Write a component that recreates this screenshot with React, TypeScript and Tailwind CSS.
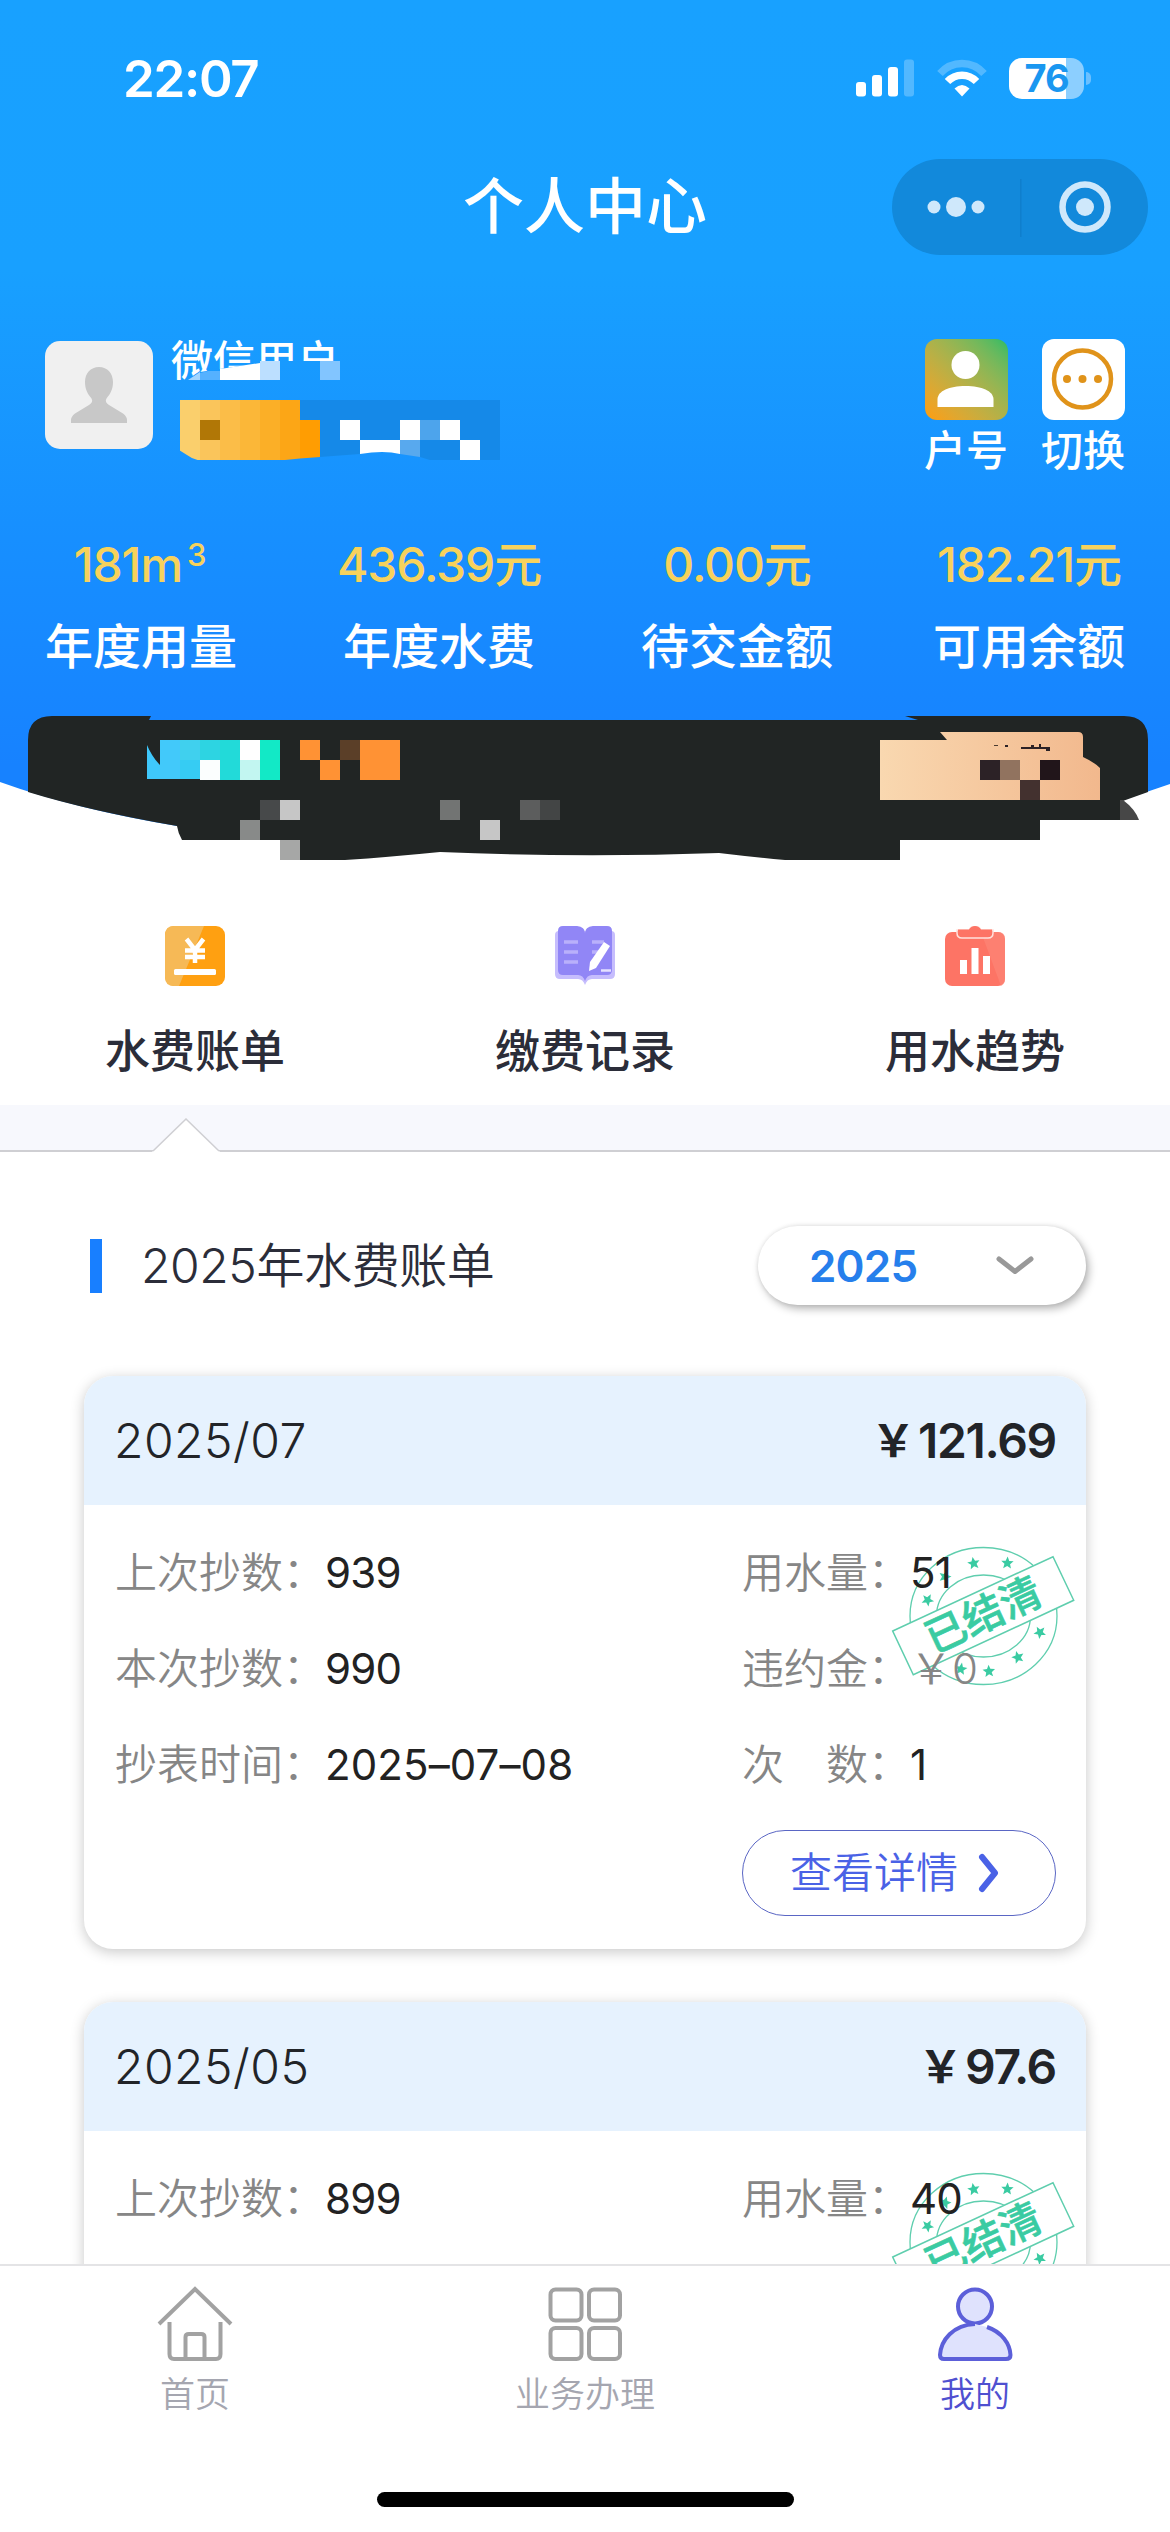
import { useState } from "react";

type Bill = {
  month: string;
  amount: string;
  last: string;
  current: string;
  date: string;
  usage: string;
  penalty: string;
  times: string;
}

const bills: Bill[] = [
  { month: "2025/07", amount: "121.69", last: "939", current: "990", date: "2025–07–08", usage: "51", penalty: "0", times: "1" },
  { month: "2025/05", amount: "97.6", last: "899", current: "939", date: "2025–05–08", usage: "40", penalty: "0", times: "1" },
];

const stats = [
  { value: "181m", sup: "3", label: "年度用量" },
  { value: "436.39元", label: "年度水费" },
  { value: "0.00元", label: "待交金额" },
  { value: "182.21元", label: "可用余额" },
];

// [x, y, width, height, color]
const nameCells: [number, number, number, number, string][] = [
  [180, 400, 20, 60, "#facf6c"],
  [200, 400, 20, 60, "#fac55b"],
  [220, 400, 20, 60, "#fbbd48"],
  [240, 400, 20, 60, "#fbb738"],
  [260, 400, 20, 60, "#fbaf27"],
  [280, 400, 20, 60, "#fca616"],
  [300, 400, 200, 60, "#1589e8"],
  [300, 420, 20, 40, "#ff9d02"],
  [200, 420, 20, 20, "#b17706"],
  [340, 420, 20, 20, "#ffffff"],
  [400, 420, 20, 20, "#ffffff"],
  [420, 420, 20, 20, "#4da4ec"],
  [440, 420, 20, 20, "#ffffff"],
  [360, 440, 40, 20, "#ffffff"],
  [400, 440, 20, 20, "#58a9ee"],
  [460, 440, 20, 20, "#ffffff"],
];

const bannerCells: [number, number, number, number, string][] = [
  [160, 740, 20, 39, "#42c9fa"],
  [180, 740, 20, 20, "#40d0ee"],
  [180, 760, 20, 19, "#36ccf3"],
  [200, 740, 20, 20, "#2dd4e2"],
  [200, 760, 20, 20, "#fbfefe"],
  [220, 740, 20, 40, "#22dad9"],
  [240, 740, 20, 20, "#ffffff"],
  [240, 760, 20, 20, "#c2f6f1"],
  [260, 740, 20, 40, "#12e9c6"],
  [300, 740, 20, 20, "#ff9234"],
  [320, 760, 20, 20, "#ff9234"],
  [340, 740, 20, 20, "#5b3f28"],
  [360, 740, 40, 40, "#ff9234"],
  [260, 800, 20, 20, "#47494a"],
  [280, 800, 20, 20, "#c6c6c6"],
  [240, 820, 20, 20, "#888a89"],
  [280, 840, 20, 20, "#a6a7a6"],
  [440, 800, 20, 20, "#727473"],
  [480, 820, 20, 20, "#c6c6c6"],
  [520, 800, 20, 20, "#5c5d5d"],
  [540, 800, 20, 20, "#434545"],
];

const faceCells: [number, number, number, number, string][] = [
  [980, 760, 20, 20, "#2c2226"],
  [1000, 760, 20, 20, "#91735f"],
  [1040, 760, 20, 20, "#21151a"],
  [1020, 780, 20, 20, "#43312f"],
  [994, 745, 4, 1, "#4a3a30"],
  [1005, 745, 3, 2, "#2c2226"],
  [1021, 747, 29, 2, "#2c2226"],
  [1031, 745, 3, 4, "#2c2226"],
  [1039, 744, 2, 5, "#2c2226"],
  [1046, 747, 4, 4, "#2c2226"],
];

const Cells = ({ cells }: { cells: [number, number, number, number, string][] }) => (
  <g shapeRendering="crispEdges">
    {cells.map(([x, y, w, h, color], i) => (
      <rect key={i} x={x} y={y} width={w} height={h} fill={color} />
    ))}
  </g>
);

// pixel blocks that hide the private parts of the header, plus the curved bottom edge
const HeaderMask = () => (
  <svg className="absolute left-0 top-0 pointer-events-none" width="1170" height="870" viewBox="0 0 1170 870">
    <defs>
      <linearGradient id="headerBlue" gradientUnits="userSpaceOnUse" x1="0" y1="0" x2="0" y2="870">
        <stop offset="0" stopColor="#18a1ff" />
        <stop offset="0.31" stopColor="#18a0ff" />
        <stop offset="0.62" stopColor="#178fff" />
        <stop offset="0.88" stopColor="#1782ff" />
      </linearGradient>
      <linearGradient id="peach" x1="0" y1="0" x2="1" y2="0">
        <stop offset="0" stopColor="#f9d8b0" />
        <stop offset="1" stopColor="#f2b88d" />
      </linearGradient>
    </defs>

    <path d="M186 380L200 372L240 366L260 361H345V384H186Z" fill="url(#headerBlue)" />
    <path d="M188 380L200 372V380Z" fill="#a3d5ff" />
    <path d="M200 373L208 371L220 371V380H200Z" fill="#55b1ff" />
    <path d="M220 369L260 363V380H220Z" fill="#ffffff" />
    <rect x="260" y="361" width="20" height="19" fill="#bcdfff" />
    <rect x="320" y="361" width="20" height="19" fill="#82c5ff" />

    <Cells cells={nameCells} />
    <path d="M179 450L187 455Q192 459 199 460.500L280 460.500Q300 458 320 457L360 454Q384 450 400 454L420 457L433 461H179Z" fill="url(#headerBlue)" />

    <path d="M0 782Q75 809 177 826Q300 846 440 850H720Q930 840 1123 800L1170 784V870H0Z" fill="#ffffff" />
    <path
      d="M28 740Q28 716 52 716H151L149 720H918L905 716H1124Q1148 716 1148 740V792L1120 802V820H1040V840H900V860H785Q752 857 719 853Q580 858 440 852Q390 857 345 860H300V840H182Q178 833 177 826Q90 811 28 792Z"
      fill="#212524"
    />
    <path d="M1120 800H1123Q1135 809 1139 820H1120Z" fill="#474747" />
    <path d="M147 745Q152 757 160 765V779H147Z" fill="#3fc8fb" />
    <Cells cells={bannerCells} />
    <path d="M880 740H947L940 732H1078Q1083 732 1083 737V757Q1094 762 1100 768V800H880Z" fill="url(#peach)" />
    <Cells cells={faceCells} />
  </svg>
);

const StatusBar = () => (
  <div className="flex h-[156px] items-center justify-between pl-[123px] pr-[79px]">
    <span className="text-[51px] font-semibold leading-none tracking-[-1.3px]">22:07</span>
    <div className="flex items-center">
      <svg width="58" height="38" viewBox="0 0 58 38" fill="#fff">
        <rect x="0" y="23" width="10" height="14.500" rx="3" />
        <rect x="16" y="16" width="10" height="21.500" rx="3" />
        <rect x="32" y="8" width="10" height="29.500" rx="3" />
        <rect x="48" y="0.500" width="10" height="37" rx="3" opacity="0.25" />
      </svg>
      <svg className="ml-[23px]" width="50" height="38" viewBox="0 0 50 38" fill="none">
        <path d="M3 14.500C15 1.200 35 1.200 47 14.500" stroke="#fff" strokeOpacity="0.25" strokeWidth="7.500" />
        <path d="M10.500 22.500C18.500 14 31.500 14 39.500 22.500" stroke="#fff" strokeWidth="7.500" />
        <path d="M25 37.500L17.500 29.500Q25 22.500 32.500 29.500Z" fill="#fff" />
      </svg>
      <div className="relative ml-[22px] flex h-[41px] w-[75px] items-center justify-center rounded-[13px] bg-[linear-gradient(90deg,#fff_57px,#8ccfff_57px)]">
        <span className="text-[38px] font-bold leading-[41px] tracking-[-1px] text-[#1a97f0]">76</span>
      </div>
      <div className="ml-[2px] h-[13px] w-[5px] rounded-r-full bg-[#6cc0ff]"></div>
    </div>
  </div>
);

const NavBar = () => (
  <div className="grid h-[102px] grid-cols-3 items-center">
    <div></div>
    <h1 className="text-center text-[61px] font-medium leading-none">个人中心</h1>
    <div className="mr-[22px] flex h-[96px] w-[256px] items-center justify-self-end rounded-full bg-[#1289db]">
      <svg width="256" height="96" viewBox="0 0 256 96" fill="#cfe8fb">
        <circle cx="42" cy="48" r="6.500" />
        <circle cx="64" cy="48" r="10" />
        <circle cx="86" cy="48" r="6.500" />
        <rect x="128" y="20" width="1.500" height="58" fill="#0f7fcd" />
        <circle cx="193" cy="48" r="22.500" fill="none" stroke="#cfe8fb" strokeWidth="6.500" />
        <circle cx="193" cy="48" r="9" />
      </svg>
    </div>
  </div>
);

const Profile = () => (
  <div className="flex h-[215px] items-start px-[45px] pt-[81px]">
    <div className="mt-[2px] h-[108px] w-[108px] rounded-[15px] bg-[#f0f0f0]">
      <svg width="108" height="108" viewBox="0 0 108 108" fill="#c8c8c8">
        <path d="M54 26C45.500 26 40 32.500 40 41C40 49 43 53 46.500 57.500C48 60 47 62 44 64L30 72.500Q26 75.500 26 79V82H82V79Q82 75.500 78 72.500L64 64C61 62 60 60 61.500 57.500C65 53 68 49 68 41C68 32.500 62.500 26 54 26Z" />
      </svg>
    </div>
    <p className="ml-[18px] text-[42px] font-medium leading-[44px]">微信用户</p>
    <div className="ml-auto flex gap-[33px]">
      <div className="flex w-[84px] flex-col items-center">
        <div className="h-[81px] w-[83px] rounded-[12px] bg-linear-to-tr from-[#ff9d05] to-[#1fbc66]">
          <svg width="83" height="81" viewBox="0 0 83 81" fill="#fff">
            <circle cx="40.500" cy="26" r="14" />
            <path d="M12.500 68V60C13 52 24 47 40.500 47S68 52 68.500 60V68Z" />
          </svg>
        </div>
        <span className="mt-[10px] text-[42px] font-medium leading-[42px]">户号</span>
      </div>
      <div className="flex w-[84px] flex-col items-center">
        <div className="h-[81px] w-[83px] rounded-[12px] bg-white">
          <svg width="83" height="81" viewBox="0 0 83 81" fill="#e0931a">
            <circle cx="40.500" cy="40" r="28.500" fill="none" stroke="#e0931a" strokeWidth="4.500" />
            <circle cx="25" cy="40" r="4" />
            <circle cx="40.500" cy="40" r="4" />
            <circle cx="56" cy="40" r="4" />
          </svg>
        </div>
        <span className="mt-[10px] text-[42px] font-medium leading-[42px]">切换</span>
      </div>
    </div>
  </div>
);

const Stats = () => (
  <div className="flex justify-between px-[45px] pt-[68px]">
    {stats.map((item) => (
      <div key={item.label} className="flex flex-col items-center">
        <p className="text-[48px] font-medium leading-[48px] tracking-[-1.1px] text-[#f7d25c]">
          {item.value}
          {item.sup && <span className="relative -top-[16px] mr-[3px] ml-[5px] text-[31px] leading-none">{item.sup}</span>}
        </p>
        <p className="mt-[34px] text-[48px] font-medium leading-[48px]">{item.label}</p>
      </div>
    ))}
  </div>
);

const BillIcon = () => (
  <svg width="60" height="60" viewBox="0 0 60 60">
    <rect width="60" height="60" rx="9" fill="#ffa011" />
    <path d="M9 0H39L14 60H9Q0 60 0 51V9Q0 0 9 0Z" fill="#f6b956" />
    <path d="M21.500 13L30 24L38.500 13M30 24V37M20 24.500H40M20 31H40" stroke="#fff" strokeWidth="4.500" fill="none" />
    <rect x="9" y="43" width="42" height="6" rx="1.500" fill="#fff" />
  </svg>
);

const RecordIcon = () => (
  <svg width="60" height="60" viewBox="0 0 60 60">
    <path d="M0 9Q0 5 4 5H56Q60 5 60 9V48Q60 53 55 53H37Q32 53 30 59Q28 53 23 53H5Q0 53 0 48Z" fill="#c6bdfd" />
    <path d="M3 5Q3 0 8 0H22Q30 1 30 7Q30 1 38 0H52Q57 0 57 5V44Q57 49 52 49H37Q32 49 30 55Q28 49 23 49H8Q3 49 3 44Z" fill="#9186f6" />
    <path d="M9 16H23M9 26H23M9 36H23M37 16H49M37 26H45" stroke="#b9b0fb" strokeWidth="3.500" />
    <path d="M49 16L55 20L41 42L34 45L35 36Z" fill="#fff" />
    <path d="M46 44.500H56" stroke="#e5e1ff" strokeWidth="2.500" />
  </svg>
);

const TrendIcon = () => (
  <svg width="60" height="60" viewBox="0 0 60 60">
    <rect x="0" y="6" width="60" height="54" rx="7" fill="#fd7465" />
    <path d="M36 6H53Q60 6 60 13V53Q60 58 56 60Z" fill="#fd8879" opacity="0.6" />
    <path d="M12 4H24Q26 0 30 0T36 4H48V7Q48 12 43 12H17Q12 12 12 7Z" fill="#fd7465" stroke="#ffe1dc" strokeWidth="1.500" />
    <path d="M13 3.500H24Q26 0 30 0T36 3.500H47V6H13Z" fill="#fd7465" />
    <path d="M18.500 34V48M30 22V48M41.500 30V48" stroke="#fff" strokeWidth="7" />
  </svg>
);

const tabs = [
  { name: "水费账单", icon: <BillIcon /> },
  { name: "缴费记录", icon: <RecordIcon /> },
  { name: "用水趋势", icon: <TrendIcon /> },
];

// 已结清 stamp, sits behind the numbers of a bill
const PaidStamp = () => {
  const stars = [[878, 190], [979, 189], [792, 230], [740, 300], [1077, 397], [1011, 472], [924, 514], [840, 507]];
  return (
    <svg className="absolute right-[11px] top-[40px]" width="184" height="142" viewBox="0 0 184 142">
      <ellipse cx="92.500" cy="71" rx="73.500" ry="68.500" fill="none" stroke="#5fceae" strokeWidth="1.300" />
      <ellipse cx="92.500" cy="71" rx="47" ry="41" fill="none" stroke="#5fceae" strokeWidth="1.300" />
      {stars.map(([x, y], i) => (
        <path
          key={i}
          transform={`translate(${x / 3 - 210} ${y / 3 - 45}) rotate(${i * 13 - 10})`}
          d="M0 -6.500L1.800 -2.200L6.200 -2L2.800 1L3.900 5.400L0 3L-3.900 5.400L-2.800 1L-6.200 -2L-1.800 -2.200Z"
          fill="#3acba2"
        />
      ))}
      <path d="M1.700 86L162 11.700L182.700 55.300L22.300 129.700Z" fill="#fff" stroke="#5fceae" strokeWidth="1.500" />
      <text
        x="0"
        y="0"
        transform="translate(92 69.500) rotate(-24.800)"
        textAnchor="middle"
        dominantBaseline="central"
        fontSize="41"
        className="fill-[#3acba2] stroke-[#3acba2] stroke-[0.6px] font-medium"
      >
        已结清
      </text>
    </svg>
  );
};

const Field = ({ label, value, muted }: { label: string, value: string, muted?: boolean }) => (
  <div className="relative flex h-[96px] items-center text-[42px] leading-none">
    <span className="font-[350] text-[#868686]">{label}：</span>
    <span className={muted ? "font-[350] text-[#868686]" : `text-[#222] ${value.length > 4 ? "tracking-[0.1px]" : "tracking-[-0.8px]"}`}>{value}</span>
  </div>
);

const BillCard = ({ bill }: { bill: Bill }) => (
  <div className="h-[573px] shrink-0 overflow-hidden rounded-[29px] bg-white shadow-[0_3px_14px_rgba(0,0,0,0.22)]">
    <div className="flex h-[129px] items-center justify-between bg-[#e6f2fe] px-[30px] text-[48px] leading-none text-[#222428]">
      <span className="font-[350] tracking-[0.5px]">{bill.month}</span>
      <span className="flex items-center font-semibold tracking-[-1.3px]">
        <span className="mr-[4px] text-[44px]">￥</span>
        {bill.amount}
      </span>
    </div>
    <div className="relative flex justify-between pl-[31px] pr-[30px] pt-[20px]">
      <PaidStamp />
      <div className="relative">
        <Field label="上次抄数" value={bill.last} />
        <Field label="本次抄数" value={bill.current} />
        <Field label="抄表时间" value={bill.date} />
      </div>
      <div className="relative w-[314px]">
        <Field label="用水量" value={bill.usage} />
        <Field label="违约金" value={`￥${bill.penalty}`} muted />
        <Field label="次　数" value={bill.times} />
        <button className="mt-[17px] flex h-[86px] w-full items-center rounded-full border border-[#5a66c4] pl-[47px] text-[42px] font-[350] leading-none text-[#4a62e6]">
          查看详情
          <svg className="ml-[20px]" width="22" height="40" viewBox="0 0 22 40" fill="none">
            <path d="M4 4L17 20L4 36" stroke="#4a62e6" strokeWidth="6" strokeLinecap="round" strokeLinejoin="round" />
          </svg>
        </button>
      </div>
    </div>
  </div>
);

const TabBar = () => (
  <nav className="h-[268px] shrink-0 border-t-2 border-[#e4e4e6] bg-white">
    <div className="grid grid-cols-3 pt-[20px] text-[35px] font-[350] leading-none text-[#a5a6b0]">
      <div className="flex flex-col items-center">
        <svg width="76" height="76" viewBox="0 0 76 76" fill="none" stroke="#a2a2a2" strokeWidth="4">
          <path d="M2 38L38 3L74 38" />
          <path d="M12.500 36V68Q12.500 73 17 73H59Q63.500 73 63.500 68V36" />
          <path d="M28.500 73V51Q28.500 48 32 48H44Q47.500 48 47.500 51V73" />
        </svg>
        <span className="mt-[15px]">首页</span>
      </div>
      <div className="flex flex-col items-center">
        <svg width="76" height="76" viewBox="0 0 76 76" fill="none" stroke="#a2a2a2" strokeWidth="4">
          <rect x="3.500" y="3.500" width="31" height="31" rx="5" />
          <rect x="42" y="3.500" width="31" height="31" rx="5" />
          <rect x="3.500" y="42" width="31" height="31" rx="5" />
          <rect x="42" y="42" width="31" height="31" rx="5" />
        </svg>
        <span className="mt-[15px]">业务办理</span>
      </div>
      <div className="flex flex-col items-center text-[#4f50d0]">
        <svg width="76" height="76" viewBox="0 0 76 76" fill="#dfe2fd" stroke="#5c5fd9" strokeWidth="4">
          <circle cx="38" cy="20.500" r="17" />
          <path d="M50 41C65 46 73 58 73.500 69Q73.500 73 69 73H7Q3 73 3 69C4 54 16 39 38 38" />
        </svg>
        <span className="mt-[15px]">我的</span>
      </div>
    </div>
    <div className="mx-auto mt-[80px] h-[15px] w-[417px] rounded-full bg-black"></div>
  </nav>
);

const App = () => {
  const [year, setYear] = useState("2025");

  return (
    <div className="flex h-[2532px] w-[1170px] flex-col overflow-hidden bg-white font-['Inter','Noto_Sans_CJK_SC',sans-serif]">
      <header className="relative h-[870px] shrink-0 bg-[linear-gradient(180deg,#18a1ff_0%,#18a0ff_31%,#178fff_62%,#1782ff_88%)] text-white">
        <StatusBar />
        <NavBar />
        <Profile />
        <Stats />
        <HeaderMask />
      </header>

      <div className="grid h-[235px] shrink-0 grid-cols-3 pt-[56px]">
        {tabs.map((tab) => (
          <div key={tab.name} className="flex flex-col items-center">
            {tab.icon}
            <span className="mt-[43px] text-[45px] font-medium leading-[45px] text-[#2b2d39]">{tab.name}</span>
          </div>
        ))}
      </div>

      <div className="relative h-[47px] shrink-0 border-b-2 border-[#cfcfd3] bg-[#f7f8fd]">
        <svg className="absolute left-[152px] top-[13px]" width="68" height="34" viewBox="0 0 68 34">
          <path d="M0 34L34 0L68 34Z" fill="#fff" />
          <path d="M1 33L34 1L67 33" fill="none" stroke="#cfcfd3" strokeWidth="1.500" />
        </svg>
      </div>

      <main className="flex min-h-0 flex-1 flex-col gap-[53px] overflow-hidden px-[84px]">
        <div className="flex h-[171px] shrink-0 items-start justify-between pt-[74px]">
          <div className="ml-[6px] mt-[13px] flex items-center">
            <div className="h-[54px] w-[12px] bg-[#187fff]"></div>
            <h2 className="ml-[39px] text-[48px] font-[350] leading-none tracking-[-0.4px] text-[#2b2d39]">2025年水费账单</h2>
          </div>
          <button
            onClick={() => setYear(year)}
            className="flex h-[79px] w-[328px] items-center rounded-full bg-white pl-[51px] text-[44px] font-semibold leading-none tracking-[-0.8px] text-[#267fec] shadow-[3px_4px_8px_rgba(0,0,0,0.28),0_0_4px_rgba(0,0,0,0.1)]"
          >
            {year}
            <svg className="ml-auto mr-[52px]" width="38" height="20" viewBox="0 0 38 20" fill="none">
              <path d="M3 3L19 15.500L35 3" stroke="#999" strokeWidth="5" strokeLinecap="round" strokeLinejoin="round" />
            </svg>
          </button>
        </div>
        {bills.map((bill) => (
          <BillCard key={bill.month} bill={bill} />
        ))}
      </main>

      <TabBar />
    </div>
  )
}

export default App
